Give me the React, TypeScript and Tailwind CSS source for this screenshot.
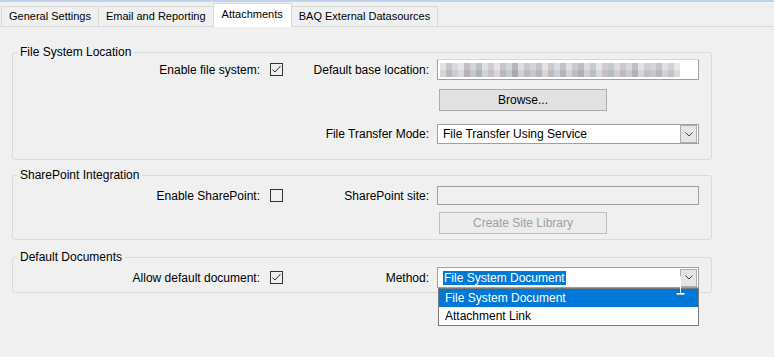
import React from 'react';

// ============================================================================
// COMPANY CONFIG - ATTACHMENTS TAB
// WinForms-style settings panel with group boxes
// ============================================================================

const FONT = { fontFamily: '"Liberation Sans", Arial, sans-serif' };

const TABS = ['General Settings', 'Email and Reporting', 'Attachments', 'BAQ External Datasources'];

// pixelated / redacted path in the base location box
const MOSAIC_TOP = [
  '#e2e2e6', '#c7c4ca', '#dcdadd', '#e7e6e9', '#c2bfc6', '#d6d4d8', '#bcc0c8', '#dfe0e4', '#cfcbcf', '#e6e4e6',
  '#c9c6cb', '#d4d7dd', '#b9b7bc', '#e0dee1', '#c6c9cf', '#d8d3d6', '#c1c5cc', '#e4e4e6', '#ccc9cd', '#d9dee5',
  '#c4c2c7', '#e2e0e3', '#cecbd0', '#bbbdc3', '#dddcdf', '#c8cad1', '#e6e5e7', '#d2cdd2', '#c5c8ce', '#dedcdf',
  '#cbc9cd', '#d6d9de', '#c1bfc4', '#e3e2e5', '#cdcfd4', '#d8d5da', '#c6c4c8', '#e1dfe2', '#d3d1d5', '#e8e7e9',
];
const MOSAIC_BOT = [
  '#d4d3d6', '#bab7bd', '#cdcbcf', '#dad8db', '#b4b1b8', '#c8c6ca', '#afb3bb', '#d1d2d6', '#c3bfc3', '#d8d6d8',
  '#bbb8bd', '#c6c9cf', '#aba9ae', '#d2d0d3', '#b8bbc1', '#cac5c8', '#b3b7be', '#d6d6d8', '#bebbbf', '#cbd0d7',
  '#b6b4b9', '#d4d2d5', '#c0bdc2', '#adafb5', '#cfced1', '#babcc3', '#d8d7d9', '#c4bfc4', '#b7bac0', '#d0ced1',
  '#bdbbbf', '#c8cbd0', '#b3b1b6', '#d5d4d7', '#bfc1c6', '#cac7cc', '#b8b6ba', '#d3d1d4', '#c5c3c7', '#dad9db',
];

function Checkbox({ checked }: { checked?: boolean }) {
  return (
    <div className="w-[13px] h-[13px] border border-[#333333] bg-[#f0f0f0] flex items-center justify-center">
      {checked && (
        <svg width="11" height="11" viewBox="0 0 11 11">
          <polyline points="1.5,5.5 4,8 9.5,2" fill="none" stroke="#333333" strokeWidth="1" />
        </svg>
      )}
    </div>
  );
}

function Chevron() {
  return (
    <svg width="8" height="5" viewBox="0 0 8 5">
      <polyline points="0.5,0.5 4,4 7.5,0.5" fill="none" stroke="#444444" strokeWidth="1" />
    </svg>
  );
}

function Combo({ value, selected }: { value: string; selected?: boolean }) {
  return (
    <div className="w-[262px] h-full bg-white border border-[#a0a0a0] flex items-center">
      <div className="flex-1 pl-[5px]">
        <span className={selected ? 'bg-[#0078d7] text-white px-[1px]' : 'text-black'}>{value}</span>
      </div>
      <div className="w-[17px] h-[18px] mr-[1px] bg-[#e5e5e5] border border-[#adadad] flex items-center justify-center">
        <Chevron />
      </div>
    </div>
  );
}

function GroupBox({ title, className, children }: { title: string; className?: string; children: React.ReactNode }) {
  return (
    <fieldset className={`ml-[12px] w-[700px] border border-[#d5dce3] rounded-[3px] ${className ?? ''}`}>
      <legend className="ml-[4px] px-[3px] text-[12px] leading-[14px] text-black">{title}</legend>
      {children}
    </fieldset>
  );
}

function Row({ left, checked, right, height, children }: {
  left: string;
  checked: boolean;
  right: string;
  height: string;
  children: React.ReactNode;
}) {
  return (
    <div className={`flex items-center ${height}`}>
      <div className="w-[247px] text-right">{left}</div>
      <div className="ml-[10px]"><Checkbox checked={checked} /></div>
      <div className="w-[146px] text-right">{right}</div>
      <div className="ml-[8px] h-full">{children}</div>
    </div>
  );
}

export default function App() {
  return (
    <div className="w-[774px] h-[357px] bg-[#f0f0f0] text-[12px] text-black overflow-hidden" style={FONT}>
      <div className="h-[2px] bg-[#bfd3ec]" />

      {/* Tabs */}
      <div className="h-[25px] pl-[1px] flex items-end border-b border-[#d9d9d9] text-[11px]">
        {TABS.map((t, i) =>
          i === 2 ? (
            <div key={t} className="h-[24px] px-[8px] -mb-[1px] -ml-px bg-white border border-b-0 border-[#d9d9d9] flex items-center pb-[3px]">
              {t}
            </div>
          ) : (
            <div key={t} className="h-[20px] px-[7px] bg-[#f0f0f0] border border-[#d9d9d9] border-b-0 -ml-px first:ml-0 flex items-center">
              {t}
            </div>
          )
        )}
      </div>

      <div className="pt-[18px]">
        {/* File System Location */}
        <GroupBox title="File System Location" className="h-[115px]">
          <Row left="Enable file system:" checked right="Default base location:" height="h-[21px]">
            <div className="w-[262px] h-full bg-white border border-[#a0a0a0] border-t-[#d7d7d7] flex items-center pl-[2px]">
              <svg width="240" height="14" viewBox="0 0 240 14">
                {MOSAIC_TOP.map((c, i) => (
                  <rect key={`t${i}`} x={i * 6} y="0" width="6" height="7" fill={c} />
                ))}
                {MOSAIC_BOT.map((c, i) => (
                  <rect key={`b${i}`} x={i * 6} y="7" width="6" height="7" fill={c} />
                ))}
              </svg>
            </div>
          </Row>
          <div className="ml-[426px] mt-[9px] w-[168px] h-[22px] bg-[#e1e1e1] border border-[#adadad] flex items-center justify-center">
            Browse...
          </div>
          <div className="flex items-center mt-[13px] h-[20px]">
            <div className="w-[416px] text-right">File Transfer Mode:</div>
            <div className="ml-[8px] h-full">
              <Combo value="File Transfer Using Service" />
            </div>
          </div>
        </GroupBox>

        {/* SharePoint Integration */}
        <GroupBox title="SharePoint Integration" className="mt-[8px] h-[72px]">
          <div className="mt-[4px]">
            <Row left="Enable SharePoint:" checked={false} right="SharePoint site:" height="h-[19px]">
              <div className="w-[262px] h-full bg-[#f0f0f0] border border-[#a0a0a0]" />
            </Row>
          </div>
          <div className="ml-[426px] mt-[7px] w-[168px] h-[22px] bg-[#ececec] border border-[#bfbfbf] text-[#a0a0a0] flex items-center justify-center">
            Create Site Library
          </div>
        </GroupBox>

        {/* Default Documents */}
        <GroupBox title="Default Documents" className="mt-[10px] h-[43px]">
          <div className="mt-[3px] relative">
            <Row left="Allow default document:" checked right="Method:" height="h-[21px]">
              <Combo value="File System Document" selected />
            </Row>
            {/* open dropdown list */}
            <div className="absolute left-[425px] top-[21px] w-[261px] bg-white border border-[#7a7a7a] z-10">
              <div className="h-[18px] pl-[6px] bg-[#0078d7] text-white flex items-center">File System Document</div>
              <div className="h-[18px] pl-[6px] flex items-center">Attachment Link</div>
            </div>
            {/* mouse cursor */}
            <svg className="absolute left-[662px] top-[6px] z-20" width="10" height="24" viewBox="0 0 10 24">
              <path d="M0.5 3.5 H5.5 V20.5 M1.5 20.5 H9.5" fill="none" stroke="#ffffff" strokeWidth="1" />
              <path d="M1.5 21.5 H9.5" fill="none" stroke="#c8c8c8" strokeWidth="1" />
            </svg>
          </div>
        </GroupBox>
      </div>
    </div>
  );
}
